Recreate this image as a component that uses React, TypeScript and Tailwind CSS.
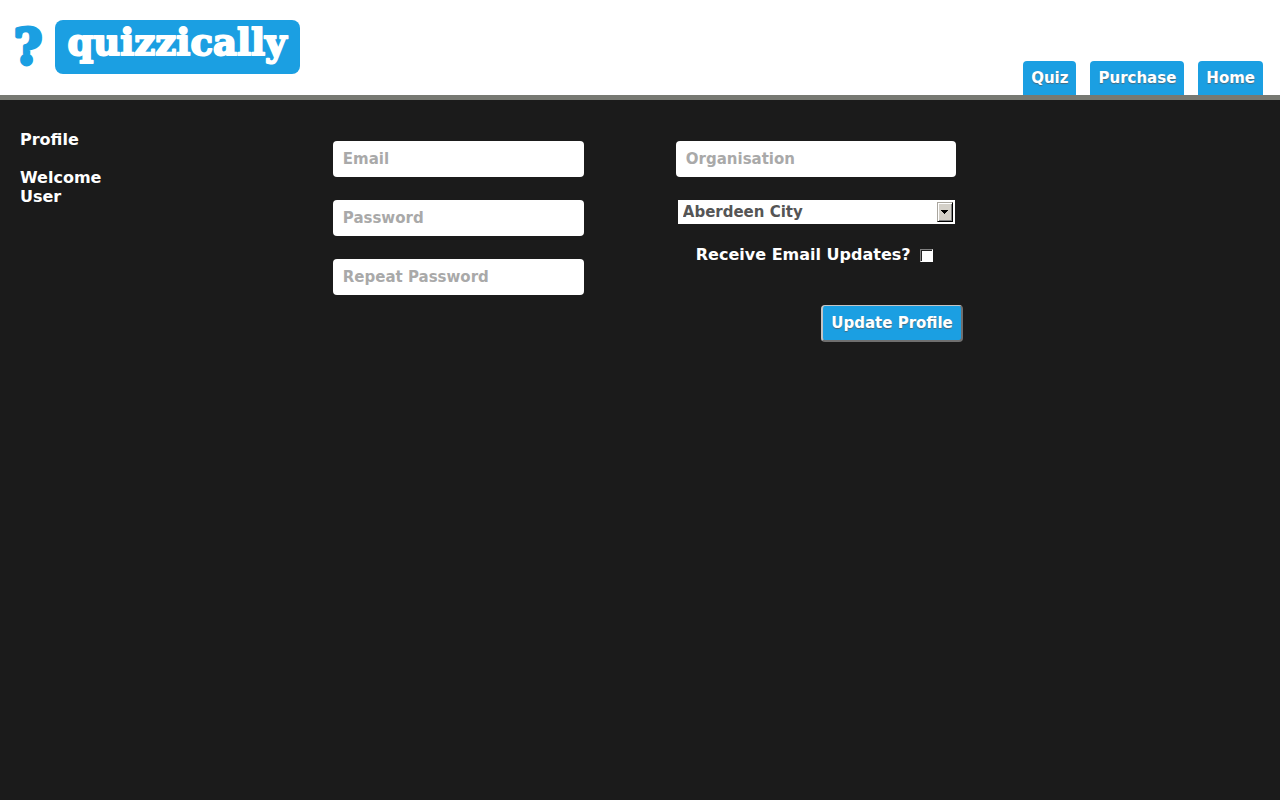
import type { InputHTMLAttributes } from "react";

const navItems = ["Quiz", "Purchase", "Home"];

function Logo() {
  return (
    <a href="#" aria-label="quizzically" className="block">
      <svg width="304" height="84" viewBox="0 0 304 84" className="block">
        <rect x="55" y="20" width="245" height="54" rx="8" fill="#1b9fe2" />
        <text
          x="28"
          y="64"
          textAnchor="middle"
          fontFamily="'DejaVu Serif', serif"
          fontWeight="700"
          fontSize="48"
          fill="#1b9fe2"
          stroke="#1b9fe2"
          strokeWidth="4"
          strokeLinejoin="round"
        >
          ?
        </text>
        <text
          x="177"
          y="55"
          textAnchor="middle"
          fontFamily="'DejaVu Serif', serif"
          fontWeight="700"
          fontSize="37"
          fill="#fff"
          stroke="#fff"
          strokeWidth="2"
          strokeLinejoin="round"
        >
          quizzically
        </text>
      </svg>
    </a>
  );
}

function Field({ label, ...rest }: { label: string } & InputHTMLAttributes<HTMLInputElement>) {
  return (
    <input
      aria-label={label}
      placeholder={label}
      className="block h-9 w-full rounded-[4px] bg-white px-[10px] text-[15px] font-bold text-[#555] placeholder:text-[#a9a9a9]"
      {...rest}
    />
  );
}

export default function App() {
  return (
    <div className="flex min-h-screen flex-col bg-[#1b1b1b] font-['DejaVu_Sans',sans-serif] text-base font-bold text-white">
      <header className="flex items-end justify-between border-b-[5px] border-[#777972] bg-white">
        <div className="pb-[11px]">
          <Logo />
        </div>
        <nav className="flex gap-[14px] pr-[17px]">
          {navItems.map((item) => (
            <a
              key={item}
              href="#"
              className="flex h-[34px] items-center rounded-t-[4px] bg-[#1b9fe2] px-2 text-[15px] [text-shadow:0_1px_1px_#4a6a7c]"
            >
              {item}
            </a>
          ))}
        </nav>
      </header>

      <main className="flex pt-[30px]">
        <aside className="w-[26%] shrink-0 pl-5 leading-[19px]">
          <h1>Profile</h1>
          <p className="mt-[19px]">
            Welcome
            <br />
            User
          </p>
        </aside>

        <form className="flex grow items-start pt-[11px]" onSubmit={(e) => e.preventDefault()}>
          <div className="mr-[92px] flex w-[251px] flex-col gap-[23px]">
            <Field label="Email" type="email" />
            <Field label="Password" type="password" />
            <Field label="Repeat Password" type="password" />
          </div>

          <div className="flex w-[287px] flex-col">
            <div className="pr-[7px]">
              <Field label="Organisation" type="text" />
            </div>
            <div className="relative mt-[23px] mr-2 ml-[2px]">
              <select
                aria-label="Council area"
                className="block h-6 w-full appearance-none bg-white pl-[5px] text-[15px] font-bold text-[#555]"
              >
                <option>Aberdeen City</option>
              </select>
              <span className="pointer-events-none absolute top-[2px] right-[2px] flex h-5 w-4 items-center justify-center border border-t-[#aaa69e] border-r-black border-b-black border-l-[#aaa69e] bg-[#d4d0c8] shadow-[inset_1px_1px_0_#fff,inset_-1px_-1px_0_#808080]">
                <svg width="7" height="4" viewBox="0 0 7 4" shapeRendering="crispEdges">
                  <path d="M0 0h7v1H0zM1 1h5v1H1zM2 2h3v1H2zM3 3h1v1H3z" fill="#000" />
                </svg>
              </span>
            </div>
            <label className="mt-[21px] flex items-center gap-[9px] pl-5 leading-[19px]">
              Receive Email Updates?
              <input
                type="checkbox"
                className="mt-[2px] size-[13px] appearance-none border border-t-[#808080] border-r-white border-b-white border-l-[#808080] bg-white shadow-[inset_1px_1px_0_#222] checked:bg-[#1b9fe2]"
              />
            </label>
            <button
              type="submit"
              className="mt-[41px] flex h-[37px] items-center self-end rounded-[4px] border-2 border-t border-t-[#c4c4c4] border-r-[#6f6f6f] border-b-[#6f6f6f] border-l-[#c4c4c4] bg-[#1b9fe2] px-2 text-[15px] [text-shadow:0_1px_1px_#4a6a7c]"
            >
              Update Profile
            </button>
          </div>
        </form>
      </main>
    </div>
  );
}
